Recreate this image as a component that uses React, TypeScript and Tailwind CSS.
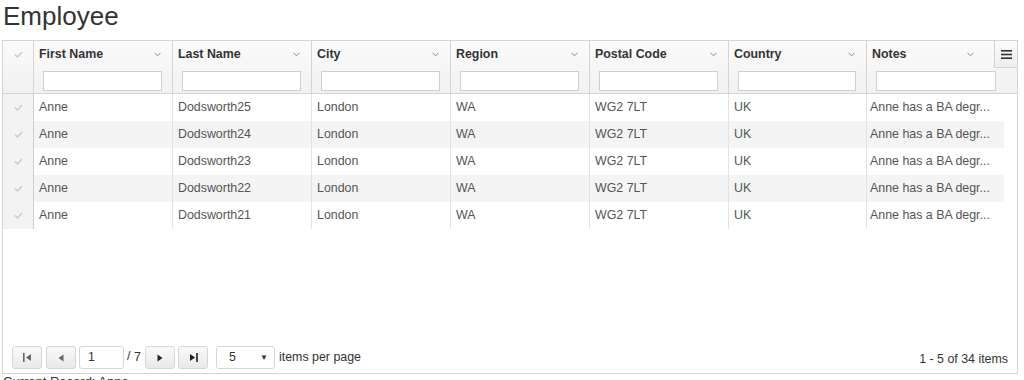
import { ReactNode } from "react"

const columns = [
  { name: "First Name", width: "w-[139px]" },
  { name: "Last Name", width: "w-[139px]" },
  { name: "City", width: "w-[139px]" },
  { name: "Region", width: "w-[139px]" },
  { name: "Postal Code", width: "w-[139px]" },
  { name: "Country", width: "w-[138px]" },
  { name: "Notes", width: "w-[137px]" },
]

const rows = [25, 24, 23, 22, 21].map((n) => [
  "Anne",
  `Dodsworth${n}`,
  "London",
  "WA",
  "WG2 7LT",
  "UK",
  "Anne has a BA degr...",
])

function Check() {
  return (
    <svg width="9" height="7" viewBox="0 0 9 7" fill="none">
      <path d="M1 3.5 L3.5 6 L8 1" stroke="#c9c9c9" strokeWidth="1.3" />
    </svg>
  )
}

function Chevron() {
  return (
    <svg width="7" height="5" viewBox="0 0 7 5" fill="none">
      <path d="M0.5 0.8 L3.5 3.8 L6.5 0.8" stroke="#8a8a8a" strokeWidth="1" />
    </svg>
  )
}

function PagerButton({ children }: { children: ReactNode }) {
  return (
    <button className="h-[23px] w-[30px] flex items-center justify-center rounded-[3px] border border-[#d6d6d6] bg-gradient-to-b from-[#f9f9f9] to-[#e9e9e9]">
      {children}
    </button>
  )
}

export default function App() {
  return (
    <div className="w-[1024px] h-[380px] overflow-hidden bg-white font-['Liberation_Sans',Arial,sans-serif] text-[#333]">
      <h1 className="mt-[1px] pl-[3px] text-[26px] leading-[30px] text-[#333]">Employee</h1>

      <div className="relative mt-[9px] ml-[2px] w-[1016px] h-[334px] border border-[#d4d4d4] flex flex-col">
        {/* header */}
        <div className="flex h-[53px] border-b border-[#d4d4d4] bg-gradient-to-b from-[#fbfbfb] to-[#f1f1f1]">
          <div className="w-[31px] shrink-0 border-r border-[#d4d4d4] flex justify-center pt-[10px]">
            <Check />
          </div>
          {columns.map((c, i) => {
            const last = i === columns.length - 1
            return (
              <div
                key={c.name}
                className={`${c.width} shrink-0 flex flex-col ${last ? "" : "border-r border-[#d4d4d4]"}`}
              >
                <div
                  className={`h-[26px] flex items-center justify-between pl-[5px] text-[12.4px] font-bold text-[#333] ${last ? "pr-[30px]" : "pr-[11px]"}`}
                >
                  <span>{c.name}</span>
                  <Chevron />
                </div>
                <div className={`h-[26px] pt-[2px] pl-[9px] ${last ? "pr-[8px]" : "pr-[10px]"}`}>
                  <input className="w-full h-[20px] border border-[#cfcfcf] bg-white outline-none" />
                </div>
              </div>
            )
          })}
        </div>

        {/* grid menu button */}
        <button className="absolute right-0 top-0 w-[23px] h-[27px] border-l border-b border-[#d4d4d4] bg-gradient-to-b from-[#fbfbfb] to-[#efefef] flex items-center justify-center">
          <svg width="11" height="9" viewBox="0 0 11 9">
            <rect x="0" y="0" width="11" height="1.6" fill="#333" />
            <rect x="0" y="3.7" width="11" height="1.6" fill="#333" />
            <rect x="0" y="7.4" width="11" height="1.6" fill="#333" />
          </svg>
        </button>

        {/* body */}
        <div className="flex-1 flex flex-col">
          {rows.map((r, ri) => (
            <div
              key={ri}
              className={`flex h-[27px] w-[1001px] text-[12.4px] text-[#555] ${ri % 2 === 1 ? "bg-[#f4f4f4]" : "bg-white"}`}
            >
              <div className="w-[31px] shrink-0 border-r border-[#cfcfcf] bg-[#f3f3f3] flex items-center justify-center">
                <Check />
              </div>
              {r.map((v, ci) => (
                <div
                  key={ci}
                  className={`${columns[ci].width} shrink-0 flex items-center whitespace-nowrap overflow-hidden ${ci < r.length - 1 ? "border-r border-[#e3e3e3] pl-[5px]" : "pl-[3px]"}`}
                >
                  {v}
                </div>
              ))}
            </div>
          ))}
        </div>

        {/* pager */}
        <div className="h-[32px] flex items-start justify-between pt-[5px] pl-[9px] pr-[9px] text-[12.4px] text-[#333]">
          <div className="flex items-center">
            <PagerButton>
              <svg width="9" height="9" viewBox="0 0 9 9">
                <rect x="0" y="0" width="1.6" height="9" fill="#666" />
                <polygon points="8,1 8,8 3,4.5" fill="#666" />
              </svg>
            </PagerButton>
            <div className="w-[4px]" />
            <PagerButton>
              <svg width="6" height="8" viewBox="0 0 6 8">
                <polygon points="5.5,0.5 5.5,7.5 0.5,4" fill="#666" />
              </svg>
            </PagerButton>
            <div className="ml-[3px] h-[23px] w-[45px] rounded-[3px] border border-[#d6d6d6] bg-white flex items-center pl-[8px]">
              1
            </div>
            <span className="ml-[3px] w-[18px]">
              <span className="relative top-[-1px]">/</span> 7
            </span>
            <PagerButton>
              <svg width="6" height="8" viewBox="0 0 6 8">
                <polygon points="0.5,0.5 0.5,7.5 5.5,4" fill="#222" />
              </svg>
            </PagerButton>
            <div className="w-[3px]" />
            <PagerButton>
              <svg width="9" height="9" viewBox="0 0 9 9">
                <polygon points="1,1 1,8 6,4.5" fill="#222" />
                <rect x="7.2" y="0" width="1.6" height="9" fill="#222" />
              </svg>
            </PagerButton>
            <div className="ml-[8px] h-[23px] w-[59px] rounded-[3px] border border-[#d6d6d6] bg-white flex items-center justify-between pl-[12px] pr-[6px]">
              <span>5</span>
              <span className="text-[8px] text-[#333]">▼</span>
            </div>
            <span className="ml-[4px]">items per page</span>
          </div>
          <div className="pt-[4px]">1 - 5 of 34 items</div>
        </div>
      </div>

      <div className="pl-[3px] text-[13px] leading-[15px] text-[#333]">Current Record: Anne</div>
    </div>
  )
}
